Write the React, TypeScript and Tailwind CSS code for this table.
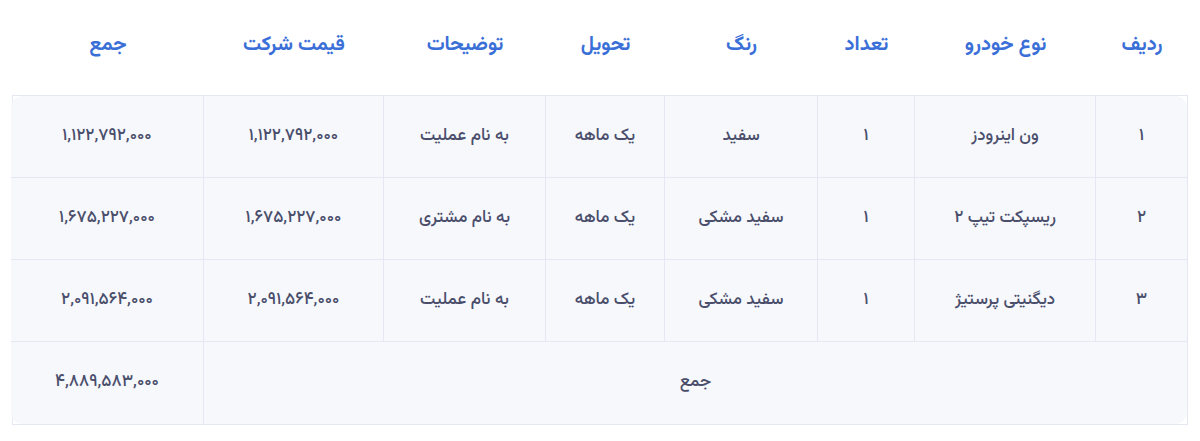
import React from "react";

const headers = ["ردیف", "نوع خودرو", "تعداد", "رنگ", "تحویل", "توضیحات", "قیمت شرکت", "جمع"];

const rows = [
  ["۱", "ون اینرودز", "۱", "سفید", "یک ماهه", "به نام عملیت", "۱,۱۲۲,۷۹۲,۰۰۰", "۱,۱۲۲,۷۹۲,۰۰۰"],
  ["۲", "ریسپکت تیپ ۲", "۱", "سفید مشکی", "یک ماهه", "به نام مشتری", "۱,۶۷۵,۲۲۷,۰۰۰", "۱,۶۷۵,۲۲۷,۰۰۰"],
  ["۳", "دیگنیتی پرستیژ", "۱", "سفید مشکی", "یک ماهه", "به نام عملیت", "۲,۰۹۱,۵۶۴,۰۰۰", "۲,۰۹۱,۵۶۴,۰۰۰"],
];

const grid = "grid grid-cols-[92px_181px_97px_153px_119px_162px_180px_192px]";

export default function App() {
  return (
    <div
      dir="rtl"
      className="w-[1200px] h-[441px] bg-white px-[12px]"
      style={{ fontFamily: '"Vazirmatn", "Noto Sans Arabic", "DejaVu Sans", sans-serif' }}
    >
      <div className={`${grid} h-[95px] items-center pb-[6px]`}>
        {headers.map((h) => (
          <div key={h} className="text-center text-[20px] font-bold text-[#3a6fd8]">
            {h}
          </div>
        ))}
      </div>
      <div className="border border-[#e3e8f3] bg-white">
        <div className={grid}>
          {rows.map((r, ri) =>
            r.map((c, ci) => (
              <div
                key={`${ri}-${ci}`}
                className={`h-[82px] flex items-center justify-center bg-[#f6f8fc] border-b border-[#e3e8f3] text-[17px] font-medium text-[#4a4e6b] ${
                  ci < 7 ? "border-l" : ""
                } ${ri === 0 && ci === 0 ? "rounded-tr-[12px]" : ""} ${
                  ri === 0 && ci === 7 ? "rounded-tl-[12px]" : ""
                }`}
              >
                {c}
              </div>
            ))
          )}
          <div className="col-span-7 h-[82px] flex items-center justify-center bg-[#f6f8fc] border-l border-[#e3e8f3] text-[17px] font-medium text-[#4a4e6b] rounded-br-[12px]">
            جمع
          </div>
          <div className="h-[82px] flex items-center justify-center bg-[#f6f8fc] text-[17px] font-medium text-[#4a4e6b] rounded-bl-[12px]">
            ۴,۸۸۹,۵۸۳,۰۰۰
          </div>
        </div>
      </div>
    </div>
  );
}
